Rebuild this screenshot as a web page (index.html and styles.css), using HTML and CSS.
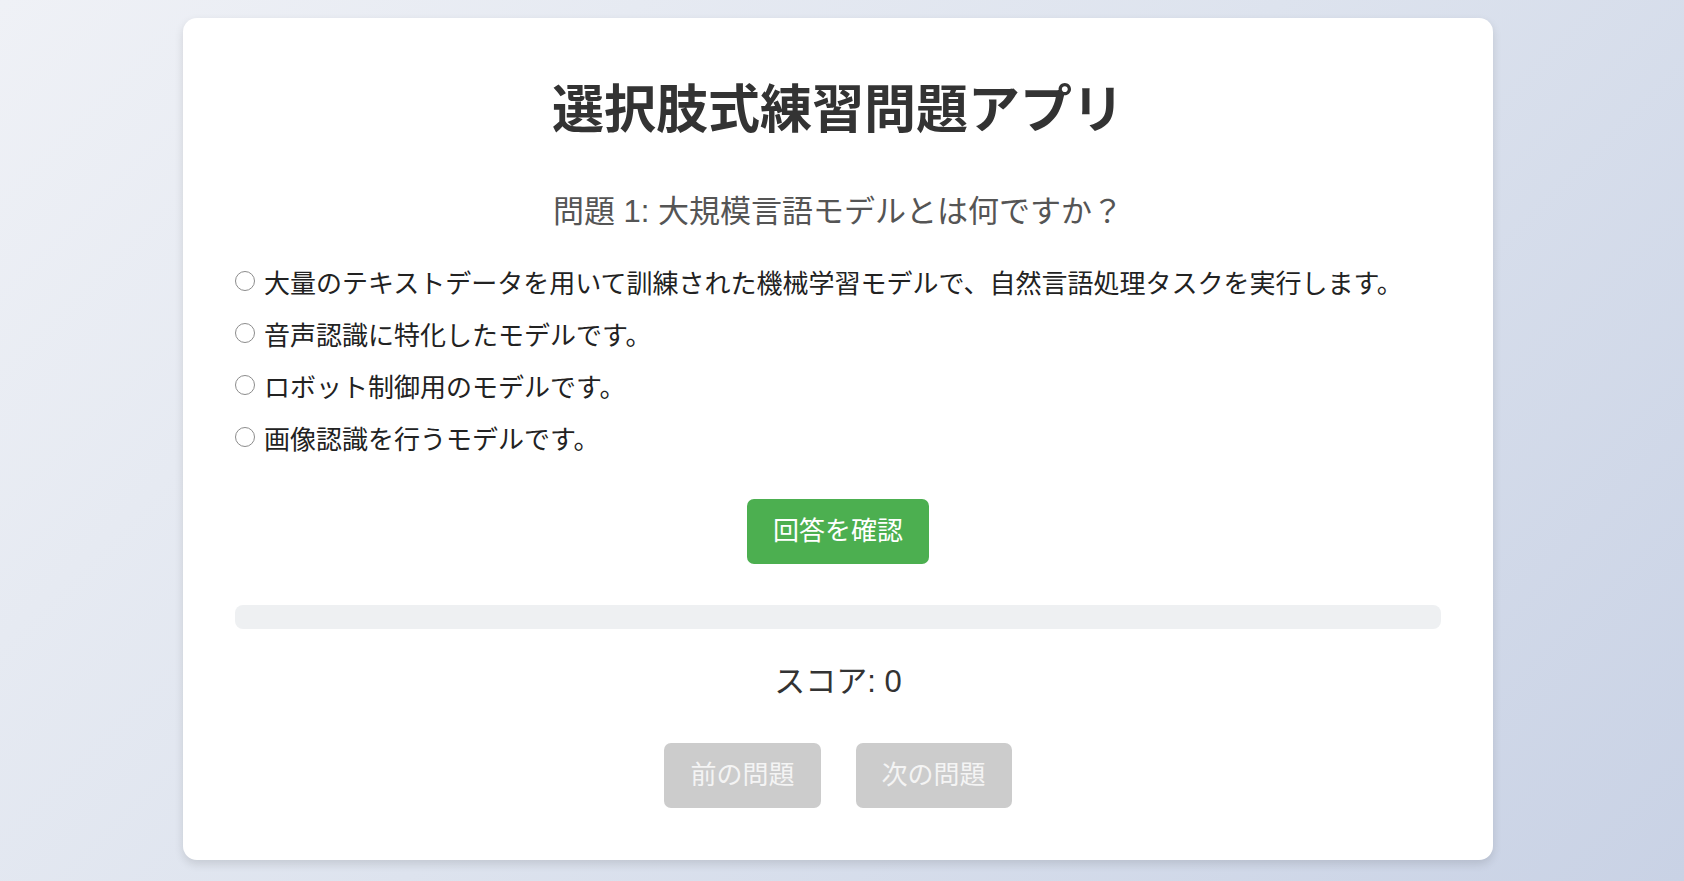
FILE: index.html
```html
<!DOCTYPE html>
<html lang="ja">
<head>
<meta charset="utf-8">
<title>選択肢式練習問題アプリ</title>
<link rel="stylesheet" href="styles.css">
</head>
<body>
<main class="card">
  <h1 class="title">選択肢式練習問題アプリ</h1>
  <h2 class="question">問題 1: 大規模言語モデルとは何ですか？</h2>
  <ul class="options">
    <li class="option"><label><input type="radio" name="q" class="radio"><span>大量のテキストデータを用いて訓練された機械学習モデルで、自然言語処理タスクを実行します。</span></label></li>
    <li class="option"><label><input type="radio" name="q" class="radio"><span>音声認識に特化したモデルです。</span></label></li>
    <li class="option"><label><input type="radio" name="q" class="radio"><span>ロボット制御用のモデルです。</span></label></li>
    <li class="option"><label><input type="radio" name="q" class="radio"><span>画像認識を行うモデルです。</span></label></li>
  </ul>
  <div class="center">
    <button class="btn btn-check">回答を確認</button>
  </div>
  <div class="progress"><div class="progress-fill" style="width:0%"></div></div>
  <p class="score">スコア: 0</p>
  <div class="nav">
    <button class="btn btn-nav" disabled>前の問題</button>
    <button class="btn btn-nav" disabled>次の問題</button>
  </div>
</main>
</body>
</html>
```
FILE: styles.css
```css
html, body {
  margin: 0;
  padding: 0;
}
body {
  box-sizing: border-box;
  min-height: 881px;
  padding-right: 8px;
  background: linear-gradient(135deg, #eff1f6 0%, #dde3ee 50%, #c9d2e5 100%);
  font-family: "Liberation Sans", "Noto Sans CJK JP", sans-serif;
  color: #333;
  overflow: hidden;
}
.card {
  box-sizing: border-box;
  width: 1310px;
  margin: 18px auto 0;
  padding: 52px;
  background: #fff;
  border-radius: 14px;
  box-shadow: 0 4px 10px rgba(0, 0, 0, 0.12);
}
.title {
  margin: 0 0 42px;
  font-size: 52px;
  line-height: 80px;
  font-weight: 700;
  text-align: center;
  color: #333;
}
.question {
  margin: 0 0 23px;
  font-size: 31px;
  line-height: 40px;
  font-weight: 400;
  text-align: center;
  color: #555;
}
.options {
  list-style: none;
  margin: 0;
  padding: 0;
}
.option {
  height: 52px;
  display: flex;
  align-items: center;
  font-size: 26px;
  color: #222;
}
.option label {
  display: flex;
  align-items: center;
}
.radio {
  appearance: none;
  -webkit-appearance: none;
  box-sizing: border-box;
  width: 20px;
  height: 20px;
  margin: 0 9px 0 0;
  border: 1.5px solid #8c8c8c;
  border-radius: 50%;
  background: #fff;
  flex: none;
}
.center {
  display: flex;
  justify-content: center;
  margin-top: 36px;
}
.btn {
  font-family: "Liberation Sans", "Noto Sans CJK JP", sans-serif;
  font-size: 26px;
  line-height: 33px;
  padding: 16px 26px;
  border: none;
  border-radius: 7px;
  color: #fff;
}
.btn-check {
  background: #4caf50;
}
.progress {
  margin-top: 41px;
  height: 24px;
  background: #eef0f2;
  border-radius: 8px;
  overflow: hidden;
}
.progress-fill {
  height: 100%;
  background: #4caf50;
}
.score {
  margin: 33px 0 0;
  font-size: 31px;
  line-height: 40px;
  text-align: center;
  color: #333;
}
.nav {
  display: flex;
  justify-content: center;
  gap: 35px;
  margin-top: 41px;
}
.btn-nav {
  background: #cccccc;
  color: #f4f4f4;
}
```
